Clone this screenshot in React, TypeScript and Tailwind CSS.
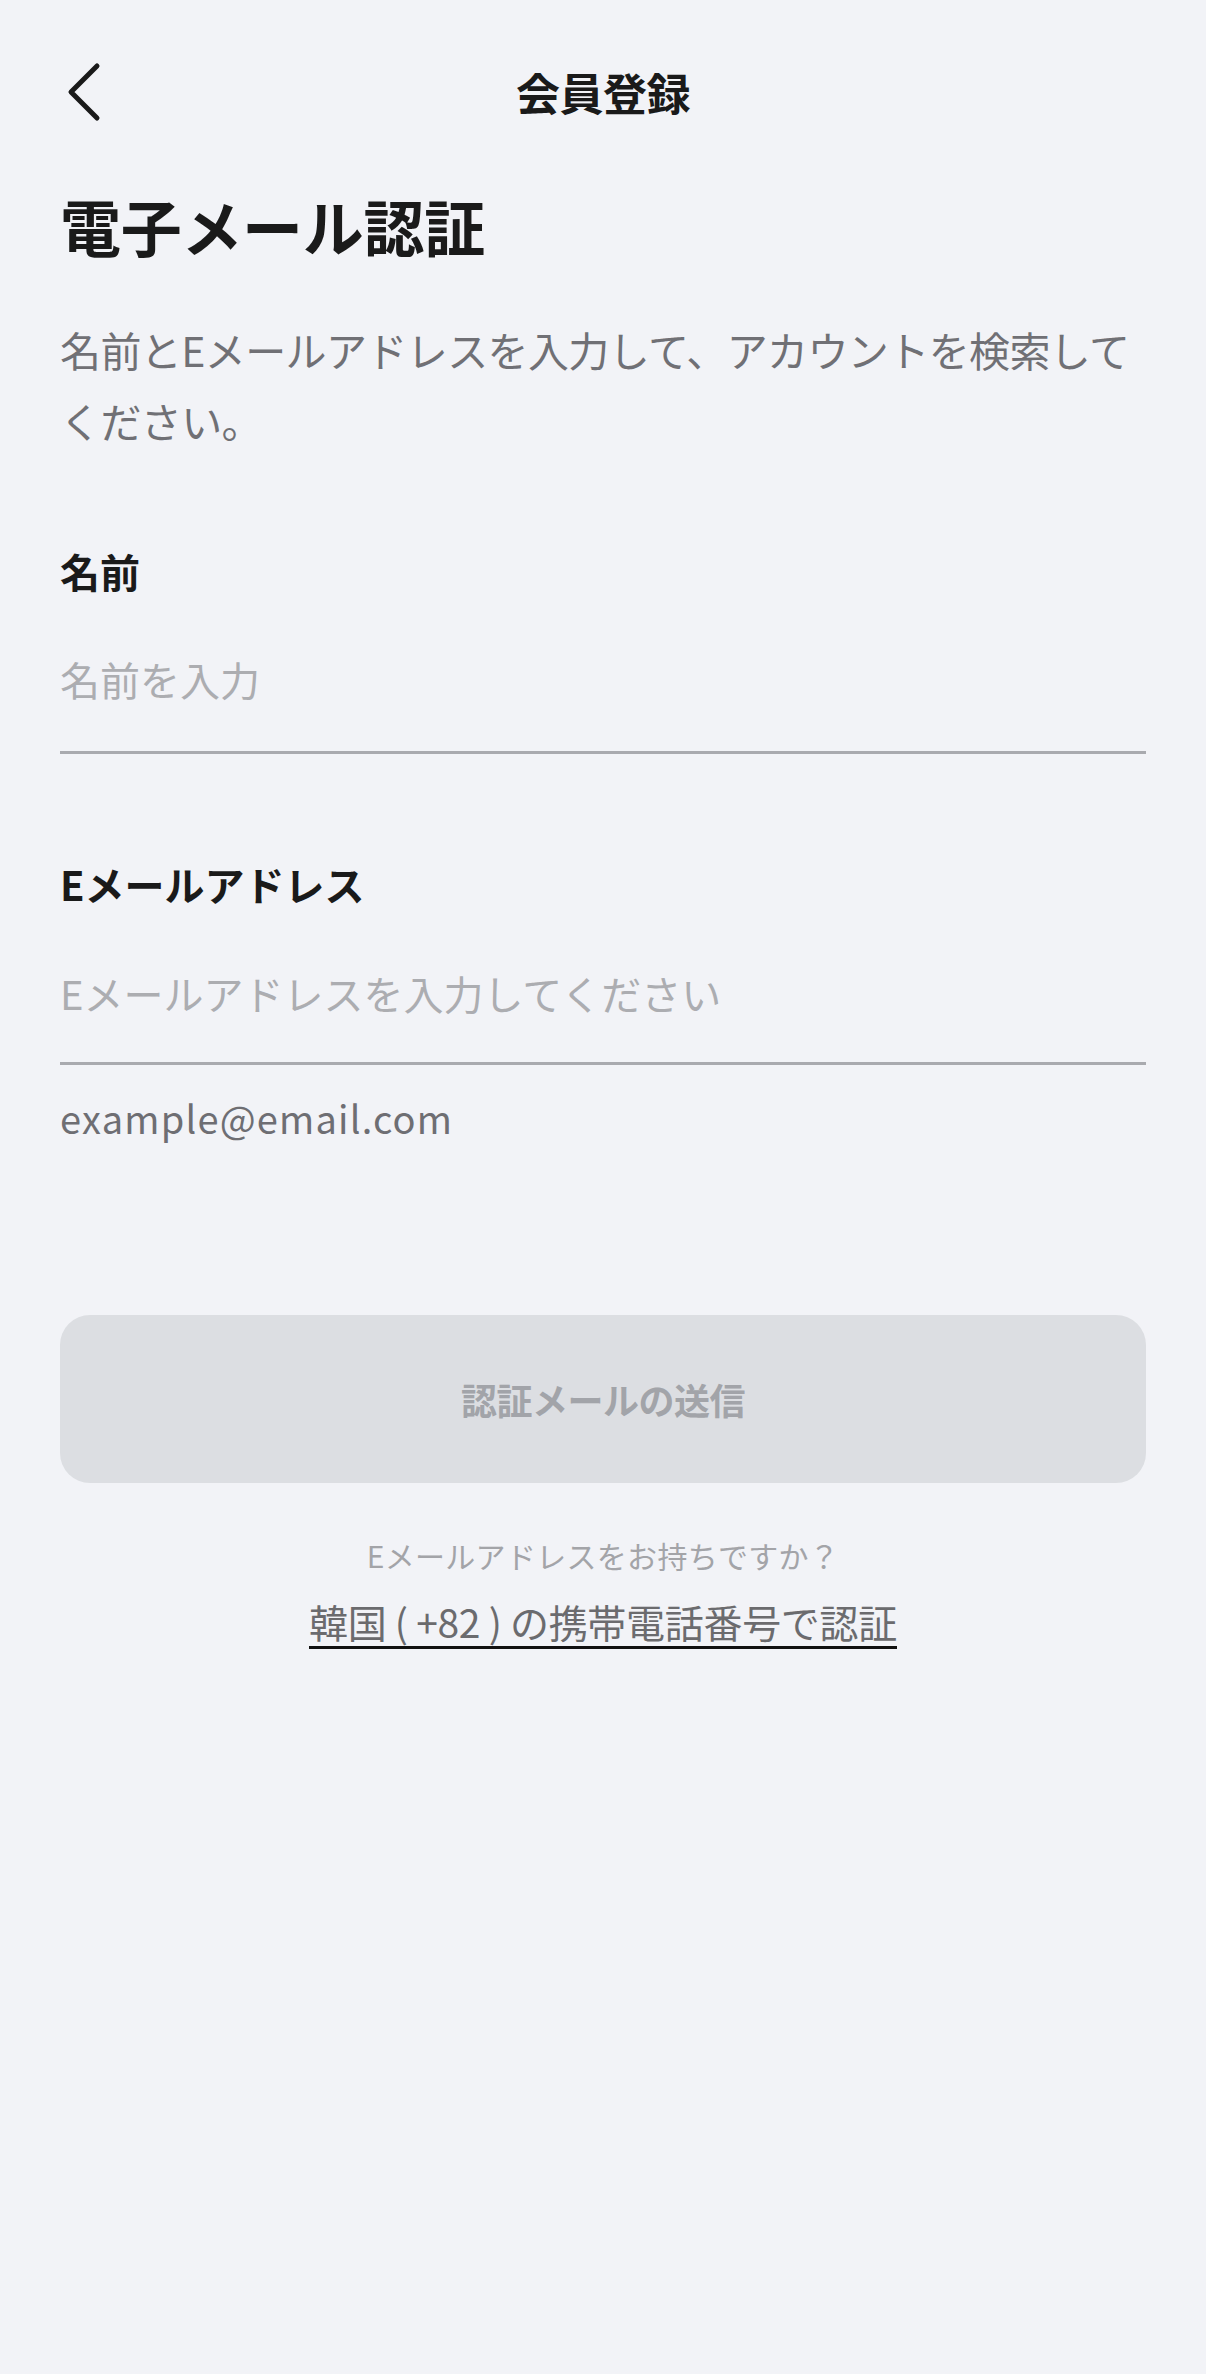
import React from "react";

export default function App() {
  return (
    <div
      className="min-h-[2374px] w-full bg-[#f2f3f7] text-[#1a1a1a]"
      style={{ fontFamily: '"Noto Sans CJK JP", "Noto Sans", sans-serif' }}
    >
      {/* Header */}
      <div className="grid h-[184px] grid-cols-[1fr_auto_1fr] items-center px-[60px]">
        <button className="flex h-[60px] w-[60px] items-center justify-start">
          <svg width="44" height="60" viewBox="0 0 44 60" fill="none">
            <path d="M37 4 L11 30 L37 56" stroke="#1a1a1a" strokeWidth="5" strokeLinecap="round" strokeLinejoin="round" />
          </svg>
        </button>
        <h1 className="text-[44px] font-bold leading-none tracking-[-0.5px]">会員登録</h1>
        <div />
      </div>

      <main className="px-[60px]">
        <h2 className="text-[61px] font-bold leading-[84px] tracking-[-0.3px]">電子メール認証</h2>

        <p className="mt-[46px] text-[41px] leading-[71px] tracking-[-0.6px] text-[#707075]">
          名前とEメールアドレスを入力して、アカウントを検索してください。
        </p>

        {/* Name */}
        <div className="mt-[87px]">
          <label className="block text-[40px] font-bold leading-[56px]">名前</label>
          <div className="mt-[52px] border-b-[3px] border-[#a9aaaf] pb-[44px]">
            <div className="text-[40px] leading-[56px] text-[#acadb1]">名前を入力</div>
          </div>
        </div>

        {/* Email */}
        <div className="mt-[102px]">
          <label className="block text-[40px] font-bold leading-[56px]">Eメールアドレス</label>
          <div className="mt-[53px] border-b-[3px] border-[#a9aaaf] pb-[41px]">
            <div className="text-[40px] leading-[56px] text-[#acadb1]">Eメールアドレスを入力してください</div>
          </div>
          <div className="mt-[28px] text-[38px] leading-[50px] tracking-[1.2px] text-[#6e6e73]">example@email.com</div>
        </div>

        {/* Button */}
        <button className="mt-[172px] flex h-[168px] w-full items-center justify-center rounded-[30px] bg-[#dcdee2]">
          <span className="text-[36px] font-bold tracking-[-0.5px] text-[#a2a4a9]">認証メールの送信</span>
        </button>

        <div className="mt-[51px] flex flex-col items-center">
          <div className="text-[30px] leading-[42px] tracking-[0.3px] text-[#a3a4a8]">Eメールアドレスをお持ちですか？</div>
          <div className="mt-[20px] border-b-[3px] border-[#111111] text-[39px] leading-[50px] tracking-[-0.3px] text-[#6b6b6e]">
            韓国 ( +82 ) の携帯電話番号で認証
          </div>
        </div>
      </main>
    </div>
  );
}
